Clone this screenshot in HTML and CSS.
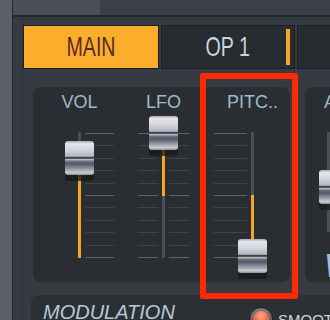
FILE: index.html
```html
<!DOCTYPE html>
<html lang="en">
<head>
  <meta charset="UTF-8" />
  <title>Operator Main</title>
  <link rel="stylesheet" href="styles.css">
</head>
<body>
  <div class="app">
    <!-- left rail -->
    <div class="rail"></div>

    <div class="main">
      <div class="topbar">
        <div class="topbar-left"></div>
        <div class="topbar-right"></div>
      </div>

      <div class="content">
        <!-- tabs -->
        <div class="tabs">
          <div class="tab active"><span>MAIN</span></div>
          <div class="tab"><span>OP 1</span><i class="tab-mark"></i></div>
          <div class="tab"><span>OP 2</span></div>
        </div>

        <div class="panels">
          <!-- faders -->
          <div class="panel faders">
            <div class="fader vol">
              <div class="label">VOL</div>
              <div class="track">
                <div class="fill" style="top:26px;height:100px"></div>
                <div class="knob" style="top:9px"></div>
              </div>
              <div class="ticks right">
                <i class="hi"></i><i></i><i></i><i></i><i></i><i class="hi"></i><i></i><i></i><i></i><i></i><i class="hi"></i>
              </div>
            </div>

            <div class="fader lfo">
              <div class="label">LFO</div>
              <div class="ticks left">
                <i class="hi"></i><i></i><i></i><i></i><i></i><i class="hi"></i><i></i><i></i><i></i><i></i><i class="hi"></i>
              </div>
              <div class="track">
                <div class="fill" style="top:1px;height:63px"></div>
                <div class="knob" style="top:-16px"></div>
              </div>
              <div class="ticks right">
                <i class="hi"></i><i></i><i></i><i></i><i></i><i class="hi"></i><i></i><i></i><i></i><i></i><i class="hi"></i>
              </div>
            </div>

            <div class="fader pitch">
              <div class="label">PITC..</div>
              <div class="ticks left">
                <i class="hi"></i><i></i><i></i><i></i><i></i><i class="hi"></i><i></i><i></i><i></i><i></i><i class="hi"></i>
              </div>
              <div class="track">
                <div class="fill" style="top:63px;height:60px"></div>
                <div class="knob" style="top:107px"></div>
              </div>
            </div>
          </div>

          <!-- next panel, cut off -->
          <div class="panel side">
            <div class="label">AMP</div>
            <div class="track">
              <div class="knob" style="top:38px"></div>
            </div>
            <div class="wave">W</div>
          </div>
        </div>

        <!-- modulation -->
        <div class="panel mod">
          <div class="mod-title">MODULATION</div>
          <div class="smooth">
            <span class="radio"><span class="radio-dot"></span></span>
            <span>SMOOTH</span>
          </div>
        </div>
      </div>
    </div>
  </div>

  <!-- red highlight box -->
  <div class="highlight"></div>
</body>
</html>
```

FILE: styles.css
```css
* {
  box-sizing: border-box;
}

body {
  margin: 0;
  width: 330px;
  height: 320px;
  overflow: hidden;
  position: relative;
  background-color: #353b41;
  font-family: "Liberation Sans", Arial, sans-serif;
}

.app {
  display: flex;
  height: 320px;
}

.rail {
  width: 13px;
  flex-shrink: 0;
  background-color: #5b6066;
  border-right: 1px solid #24282c;
}

.main {
  flex: 1;
  min-width: 0;
  display: flex;
  flex-direction: column;
}

.topbar {
  display: flex;
  flex-shrink: 0;
  height: 17px;
  border-bottom: 2px solid #23272b;
}

.topbar-left {
  width: 87px;
  background-color: #4b5056;
}

.topbar-right {
  flex: 1;
  background-color: #3b4046;
}

.content {
  flex: 1;
  min-height: 0;
  margin-left: 9px;
  padding-top: 8px;
  border-left: 1px solid #2e3338;
}

/* tabs */
.tabs {
  display: flex;
  gap: 2px;
  height: 44px;
}

.tab {
  position: relative;
  flex-shrink: 0;
  width: 134px;
  display: flex;
  align-items: center;
  justify-content: center;
  background-color: #272c31;
  border: 1px solid #1c1f23;
  color: #c9d6df;
  font-size: 28px;
}

.tab span {
  display: inline-block;
  transform: scaleX(0.7);
}

.tab.active {
  width: 136px;
  background-color: #fcad2b;
  color: #5a2b2e;
}

.tab-mark {
  position: absolute;
  right: 4px;
  top: 3px;
  width: 4px;
  height: 36px;
  background-color: #f8a42a;
}

/* panels */
.panels {
  display: flex;
  gap: 15px;
  margin: 18px 0 0 10px;
}

.panel {
  flex-shrink: 0;
  background-color: #2a2e33;
  border-radius: 8px;
}

.faders {
  width: 257px;
  height: 195px;
  display: flex;
  gap: 24px;
  padding: 6px 0 0 45px;
}

.label {
  height: 18px;
  line-height: 18px;
  font-size: 18px;
  color: #9fb9cd;
  white-space: nowrap;
}

.fader {
  display: grid;
  grid-template-rows: 18px 126px;
  row-gap: 21px;
  column-gap: 4px;
}

.fader .label {
  grid-area: label;
  justify-self: center;
}

.fader.vol {
  grid-template-columns: 3px 29px;
  grid-template-areas: "label ." "track right";
}

.fader.lfo {
  grid-template-columns: 20px 3px 20px;
  grid-template-areas: ". label ." "left track right";
}

.fader.pitch {
  margin-left: 1px;
  grid-template-columns: 33px 3px;
  grid-template-areas: ". label" "left track";
}

.track {
  grid-area: track;
  position: relative;
  width: 3px;
  background-color: #4b5058;
}

.fill {
  position: absolute;
  left: 0;
  width: 3px;
  background-color: #f8a526;
}

.knob {
  position: absolute;
  left: -13px;
  width: 29px;
  height: 34px;
  border-radius: 3px;
  background: linear-gradient(to bottom,
    #a7abb3 0, #e4e6ea 8%, #d4d7dd 25%, #b2b6be 45%,
    #40434b 48%, #40434b 51%, #b9bcc4 54%, #6d707d 60%,
    #54576a 67%, #8d909b 80%, #c8cbd1 93%, #8e9199 100%);
  box-shadow: 0 6px 0 rgba(22, 25, 28, 0.75);
}

.ticks {
  align-self: start;
  margin-top: 1px;
  height: 125px;
  display: flex;
  flex-direction: column;
  justify-content: space-between;
}

.ticks.left {
  grid-area: left;
}

.ticks.right {
  grid-area: right;
}

.ticks i {
  display: block;
  height: 1px;
  background-color: #40454b;
}

.ticks i.hi {
  background-color: #5e6369;
}

/* cut-off panel on the right */
.side {
  width: 120px;
  height: 195px;
  display: flex;
  flex-direction: column;
  padding: 6px 0 0 19px;
}

.side .track {
  margin: 21px 0 0 3px;
  height: 100px;
}

.side .knob {
  left: -8px;
}

.wave {
  margin-top: 17px;
  font-size: 33px;
  line-height: 33px;
  font-style: italic;
  color: #a9bccb;
}

/* modulation */
.mod {
  display: flex;
  margin: 13px 0 0 8px;
  height: 40px;
  width: 320px;
  padding: 7px 0 0 12px;
  border-radius: 8px 8px 0 0;
  background-color: #2b3035;
}

.mod-title {
  width: 206px;
  font-size: 20px;
  line-height: 20px;
  font-style: italic;
  color: #b9c8d6;
}

.smooth {
  display: flex;
  align-items: center;
  gap: 5px;
  margin-top: 1px;
  font-size: 15px;
  color: #c8d4de;
}

.radio {
  display: flex;
  align-items: center;
  justify-content: center;
  width: 24px;
  height: 24px;
  border-radius: 50%;
  background: linear-gradient(#7a7f86, #4a4f55);
  border: 1px solid #1e2125;
}

.radio-dot {
  width: 16px;
  height: 16px;
  border-radius: 50%;
  background: radial-gradient(circle at 50% 30%, #ffb39a 0, #ff6a47 45%, #e2401f 100%);
}

/* annotation */
.highlight {
  position: absolute;
  left: 200px;
  top: 73px;
  width: 98px;
  height: 226px;
  border: 6px solid #ff2a00;
  border-radius: 2px;
}
```
